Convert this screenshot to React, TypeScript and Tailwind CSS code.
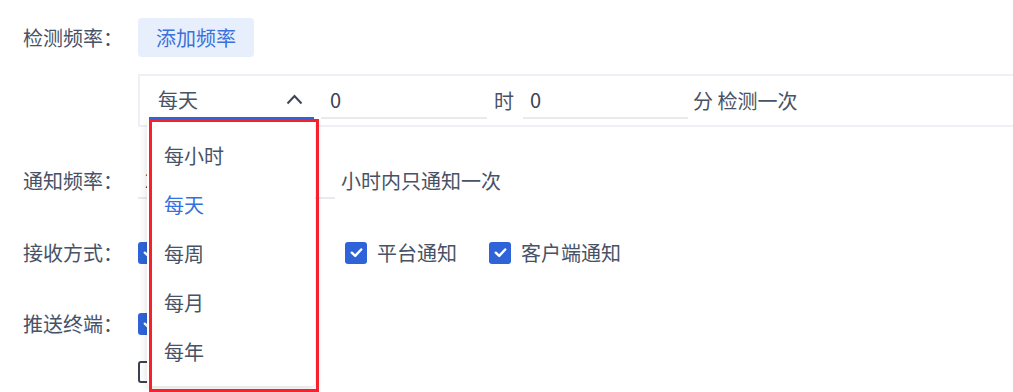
import type {ReactNode} from 'react';

const options = ['每小时', '每天', '每周', '每月', '每年'];

function Check({checked = true}: {checked?: boolean}) {
  if (!checked) {
    return (
      <span className="h-[22px] w-[22px] shrink-0 rounded-[3px] border-2 border-[#3a4252] bg-white" />
    );
  }
  return (
    <span className="flex h-[22px] w-[22px] shrink-0 items-center justify-center rounded-[3px] bg-[#2f63d8]">
      <svg viewBox="0 0 16 16" className="h-[15px] w-[15px]" fill="none">
        <path
          d="M3 8.2 6.6 11.6 13 4.8"
          stroke="#fff"
          strokeWidth="2.6"
          strokeLinecap="round"
          strokeLinejoin="round"
        />
      </svg>
    </span>
  );
}

function CheckItem({label, checked, className = ''}: {label: string; checked?: boolean; className?: string}) {
  return (
    <label className={`flex items-center gap-[10px] ${className}`}>
      <Check checked={checked} />
      <span>{label}</span>
    </label>
  );
}

function Row({label, children, className = ''}: {label?: string; children: ReactNode; className?: string}) {
  return (
    <div className={`flex h-[37px] items-center ${className}`}>
      <div className="w-[115px] shrink-0">{label}</div>
      {children}
    </div>
  );
}

export default function App() {
  return (
    <div className="relative h-[392px] w-[1013px] overflow-hidden bg-white font-['Noto_Sans_CJK_SC','Noto_Sans',sans-serif] text-[20px] leading-none text-[#475266]">
      <div className="pl-[23px] pt-[18px]">
        {/* 检测频率 */}
        <div className="flex items-start">
          <div className="flex h-[39px] w-[115px] shrink-0 items-center">检测频率：</div>
          <div className="flex flex-col">
            <button
              type="button"
              className="h-[39px] w-[116px] rounded-[4px] bg-[#e8effc] text-[#3b71db]"
            >
              添加频率
            </button>
            <div className="mt-[17px] flex h-[53px] w-[900px] items-center border-2 border-r-0 border-[#eff0f5] pl-[9px]">
              <div className="relative flex h-[37px] w-[165px] items-center justify-between border-b-2 border-[#2f66dc] pl-[9px] pr-[11px]">
                <span>每天</span>
                <svg viewBox="0 0 17 11" className="h-[11px] w-[17px]" fill="none">
                  <path d="M1.5 9.5 8.5 2l7 7.5" stroke="#3c4556" strokeWidth="2" />
                </svg>

                {/* dropdown menu */}
                <div className="absolute left-[-2px] top-[39px] z-10 w-[168px] rounded-[4px] bg-white pb-[10px] pt-[10px] shadow-[0_2px_8px_rgba(0,0,0,0.14)]">
                  {options.map((o) => (
                    <div
                      key={o}
                      className={`flex h-[49px] items-center pl-[17px] ${o === '每天' ? 'text-[#3370e0]' : ''}`}
                    >
                      {o}
                    </div>
                  ))}
                </div>
                {/* highlight box */}
                <div className="pointer-events-none absolute left-0 top-[37px] z-20 h-[273px] w-[170px] border-[3px] border-[#f5222d]" />
              </div>

              <div className="ml-[7px] flex h-[37px] w-[166px] items-center border-b-2 border-[#e9eaf0] pl-[9px] text-[#3a4354]">
                0
              </div>
              <span className="ml-[7px]">时</span>
              <div className="ml-[9px] flex h-[37px] w-[165px] items-center border-b-2 border-[#e9eaf0] pl-[7px] text-[#3a4354]">
                0
              </div>
              <span className="ml-[5px]">分 检测一次</span>
            </div>
          </div>
        </div>

        {/* 通知频率 */}
        <Row label="通知频率：" className="mt-[35px]">
          <div className="flex h-[37px] w-[197px] items-center border-b-2 border-[#e9eaf0] pl-[7px] text-[#3a4354]">
            24
          </div>
          <span className="ml-[6px]">小时内只通知一次</span>
        </Row>

        {/* 接收方式 */}
        <Row label="接收方式：" className="mt-[35px]">
          <CheckItem label="企业微信群通知" />
          <CheckItem label="平台通知" className="ml-[35px]" />
          <CheckItem label="客户端通知" className="ml-[32px]" />
        </Row>

        {/* 推送终端 */}
        <Row label="推送终端：" className="mt-[34px]">
          <CheckItem label="PC端" />
        </Row>
        <Row className="mt-[11px]">
          <CheckItem label="移动端" checked={false} />
        </Row>
      </div>
    </div>
  );
}
